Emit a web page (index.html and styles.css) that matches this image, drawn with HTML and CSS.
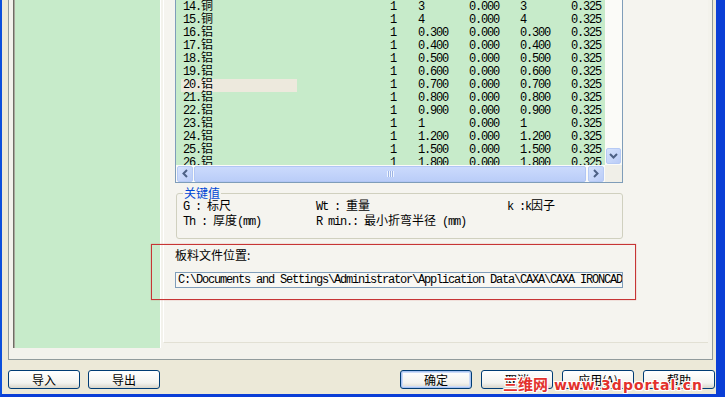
FILE: index.html
```html
<!DOCTYPE html>
<html lang="zh-CN">
<head>
    <meta charset="UTF-8">
    <title>板料设置</title>
    <link rel="stylesheet" href="styles.css">
</head>
<body>
    <div class="window">
        <div class="tab-page">
            <div class="side-panel"></div>

            <div class="main-panel">
                <div class="list-view">
                    <div class="list-body">
                        <div class="rows">
                            <div class="row"><span class="name">14.<i>铜</i></span><span>1</span><span>3</span><span>0.000</span><span>3</span><span>0.325</span></div>
                            <div class="row"><span class="name">15.<i>铜</i></span><span>1</span><span>4</span><span>0.000</span><span>4</span><span>0.325</span></div>
                            <div class="row"><span class="name">16.<i>铝</i></span><span>1</span><span>0.300</span><span>0.000</span><span>0.300</span><span>0.325</span></div>
                            <div class="row"><span class="name">17.<i>铝</i></span><span>1</span><span>0.400</span><span>0.000</span><span>0.400</span><span>0.325</span></div>
                            <div class="row"><span class="name">18.<i>铝</i></span><span>1</span><span>0.500</span><span>0.000</span><span>0.500</span><span>0.325</span></div>
                            <div class="row"><span class="name">19.<i>铝</i></span><span>1</span><span>0.600</span><span>0.000</span><span>0.600</span><span>0.325</span></div>
                            <div class="row"><span class="name selected">20.<i>铝</i></span><span>1</span><span>0.700</span><span>0.000</span><span>0.700</span><span>0.325</span></div>
                            <div class="row"><span class="name">21.<i>铝</i></span><span>1</span><span>0.800</span><span>0.000</span><span>0.800</span><span>0.325</span></div>
                            <div class="row"><span class="name">22.<i>铝</i></span><span>1</span><span>0.900</span><span>0.000</span><span>0.900</span><span>0.325</span></div>
                            <div class="row"><span class="name">23.<i>铝</i></span><span>1</span><span>1</span><span>0.000</span><span>1</span><span>0.325</span></div>
                            <div class="row"><span class="name">24.<i>铝</i></span><span>1</span><span>1.200</span><span>0.000</span><span>1.200</span><span>0.325</span></div>
                            <div class="row"><span class="name">25.<i>铝</i></span><span>1</span><span>1.500</span><span>0.000</span><span>1.500</span><span>0.325</span></div>
                            <div class="row"><span class="name">26.<i>铝</i></span><span>1</span><span>1.800</span><span>0.000</span><span>1.800</span><span>0.325</span></div>
                        </div>
                        <div class="vscroll">
                            <div class="sb-btn">
                                <svg width="9" height="6" viewBox="0 0 9 6"><path d="M1 1 L4.5 4.5 L8 1" fill="none" stroke="#4D6185" stroke-width="2"/></svg>
                            </div>
                        </div>
                    </div>
                    <div class="hscroll-row">
                        <div class="hscroll">
                            <div class="sb-btn">
                                <svg width="6" height="9" viewBox="0 0 6 9"><path d="M5 1 L1.5 4.5 L5 8" fill="none" stroke="#4D6185" stroke-width="2"/></svg>
                            </div>
                            <div class="thumb"><span class="grip"></span></div>
                            <div class="sb-btn">
                                <svg width="6" height="9" viewBox="0 0 6 9"><path d="M1 1 L4.5 4.5 L1 8" fill="none" stroke="#4D6185" stroke-width="2"/></svg>
                            </div>
                        </div>
                        <div class="corner"></div>
                    </div>
                </div>

                <fieldset class="key-group">
                    <legend>关键值</legend>
                    <div class="key-grid">
                        <span>G : <i>标尺</i></span>
                        <span>Wt : <i>重量</i></span>
                        <span>k :k<i>因子</i></span>
                        <span>Th : <i>厚度</i>(mm)</span>
                        <span>R min.: <i>最小折弯半径</i> (mm)</span>
                        <span></span>
                    </div>
                </fieldset>

                <div class="file-label">板料文件位置:</div>
                <div class="file-path">C:\Documents and Settings\Administrator\Application Data\CAXA\CAXA IRONCAD</div>
            </div>
        </div>

        <div class="button-bar">
            <button class="btn">导入</button>
            <button class="btn">导出</button>
            <div class="right-buttons">
                <button class="btn default">确定</button>
                <button class="btn">取消</button>
                <button class="btn">应用(A)</button>
                <button class="btn">帮助</button>
            </div>
        </div>

        <div class="mark-box"></div>
        <div class="watermark"><span class="wm-cn">三维网</span> www.3dportal.cn</div>
    </div>
</body>
</html>
```

FILE: styles.css
```css
* {
    margin: 0;
    padding: 0;
    box-sizing: border-box;
}

body {
    width: 725px;
    height: 397px;
    overflow: hidden;
    font-family: 'Liberation Mono', 'Noto Sans CJK SC', monospace;
    font-size: 12px;
    color: #000;
}

/* chinese glyphs inside mono text keep their full width */
i {
    font-style: normal;
    letter-spacing: 0;
}

.window {
    position: relative;
    height: 397px;
    background: #ECE9D8;
    border-left: 2px solid #0B4FDC;
    border-right: 9px solid #0A3ED6;
    border-bottom: 3px solid #0A3ED6;
    display: flex;
    flex-direction: column;
}

/* tab page */
.tab-page {
    display: flex;
    align-items: flex-start;
    height: 360px;
    margin: 0 3px 0 6px;
    padding-left: 4px;
    background: #F3F2EC;
    border: 1px solid #919B9C;
    border-top: none;
}

.side-panel {
    width: 148px;
    height: 348px;
    background: #C7EBCA;
    border-left: 1px solid #6E6D64;
    border-right: 1px solid #fff;
    box-shadow: inset 1px 0 #A9A89D;
}

.main-panel {
    width: 545px;
    height: 343px;
    margin-left: 2px;
    padding-left: 11px;
    background: #F5F4EF;
    border-left: 1px solid #fff;
    border-bottom: 1px solid #E2E0D4;
}

/* list */
.list-view {
    width: 448px;
    height: 183px;
    background: #C7EBCA;
    border: 1px solid #7F9DB9;
    border-top: none;
}

.list-body {
    display: flex;
    height: 165px;
}

.rows {
    flex: 1;
    overflow: hidden;
    padding: 1px 0 0 5px;
}

.row {
    display: grid;
    grid-template-columns: 209px 28px 51px 51px 51px auto;
    height: 13px;
    line-height: 13px;
    letter-spacing: -1.2px;
    white-space: nowrap;
}

.name {
    width: 116px;
    padding-left: 2px;
}

.name.selected {
    background: #EDE9DD;
}

.vscroll {
    width: 17px;
    display: flex;
    flex-direction: column;
    justify-content: flex-end;
    padding: 0 1px 1px;
    background: #FBFBF8;
}

.sb-btn {
    width: 16px;
    height: 16px;
    display: flex;
    align-items: center;
    justify-content: center;
    background: linear-gradient(135deg, #D6E3FD, #BACCF7);
    border: 1px solid #B6CAF5;
    border-radius: 2px;
}

.vscroll .sb-btn {
    width: 15px;
}

.hscroll-row {
    display: flex;
    height: 17px;
}

.hscroll {
    flex: 1;
    display: flex;
    align-items: center;
    padding: 0 1px;
    background: #FBFBF8;
}

.thumb {
    width: 392px;
    height: 16px;
    margin: 0 2px 0 1px;
    display: flex;
    align-items: center;
    justify-content: center;
    background: linear-gradient(#CBDAFC, #BACDF8);
    border: 1px solid #B1C6F4;
    border-radius: 2px;
}

.grip {
    width: 7px;
    height: 6px;
    background: repeating-linear-gradient(90deg, #EEF4FE 0 1px, #9DB4E6 1px 2px);
}

.corner {
    width: 17px;
    background: #F0EFE8;
}

/* key values */
.key-group {
    width: 447px;
    margin: 3px 0 0 1px;
    padding: 0 8px 8px 6px;
    border: 1px solid #D0D0BF;
    border-radius: 3px;
}

.key-group legend {
    color: #0046D5;
    font-family: 'Noto Sans CJK SC', sans-serif;
    line-height: 14px;
    padding: 0 1px;
}

.key-grid {
    display: grid;
    grid-template-columns: 133px 191px auto;
    line-height: 15px;
    letter-spacing: -1.2px;
    white-space: nowrap;
}

.file-label {
    margin-top: 9px;
    line-height: 14px;
    font-family: 'Noto Sans CJK SC', sans-serif;
}

.file-path {
    width: 448px;
    height: 16px;
    margin-top: 10px;
    padding-left: 2px;
    line-height: 14px;
    letter-spacing: -1.2px;
    white-space: nowrap;
    overflow: hidden;
    background: #F9F8F4;
    border: 1px solid #7F9DB9;
}

/* buttons */
.button-bar {
    display: flex;
    gap: 8px;
    margin-top: 10px;
    padding: 0 1px 0 6px;
}

.right-buttons {
    display: flex;
    gap: 9px;
    margin-left: auto;
}

.btn {
    width: 72px;
    height: 19px;
    font-family: 'Noto Sans CJK SC', sans-serif;
    font-size: 12px;
    line-height: 17px;
    color: #000;
    background: linear-gradient(#FFFFFF, #F3F3EF 70%, #D9D6CB);
    border: 1px solid #003C74;
    border-radius: 3px;
}

.btn.default {
    box-shadow: inset 0 0 0 1px #A8C3F2, inset 0 0 0 2px #CDDCF8;
}

/* overlays */
.mark-box {
    position: absolute;
    left: 149px;
    top: 244px;
    width: 485px;
    height: 56px;
    border: 1px solid #C73535;
    box-shadow: 0 0 1px rgba(200, 50, 50, 0.6);
}

.watermark {
    position: absolute;
    left: 501px;
    top: 375px;
    font-family: 'DejaVu Sans', sans-serif;
    font-weight: bold;
    font-size: 14px;
    line-height: 17px;
    letter-spacing: 1px;
    color: #E3312C;
    white-space: nowrap;
    text-shadow: 1px 0 #fff, -1px 0 #fff, 0 1px #fff, 0 -1px #fff, 1px 1px #fff, -1px -1px #fff, 1px -1px #fff, -1px 1px #fff;
}

.wm-cn {
    font-family: 'Noto Sans CJK SC', sans-serif;
    font-size: 15px;
    letter-spacing: 0;
}
```
